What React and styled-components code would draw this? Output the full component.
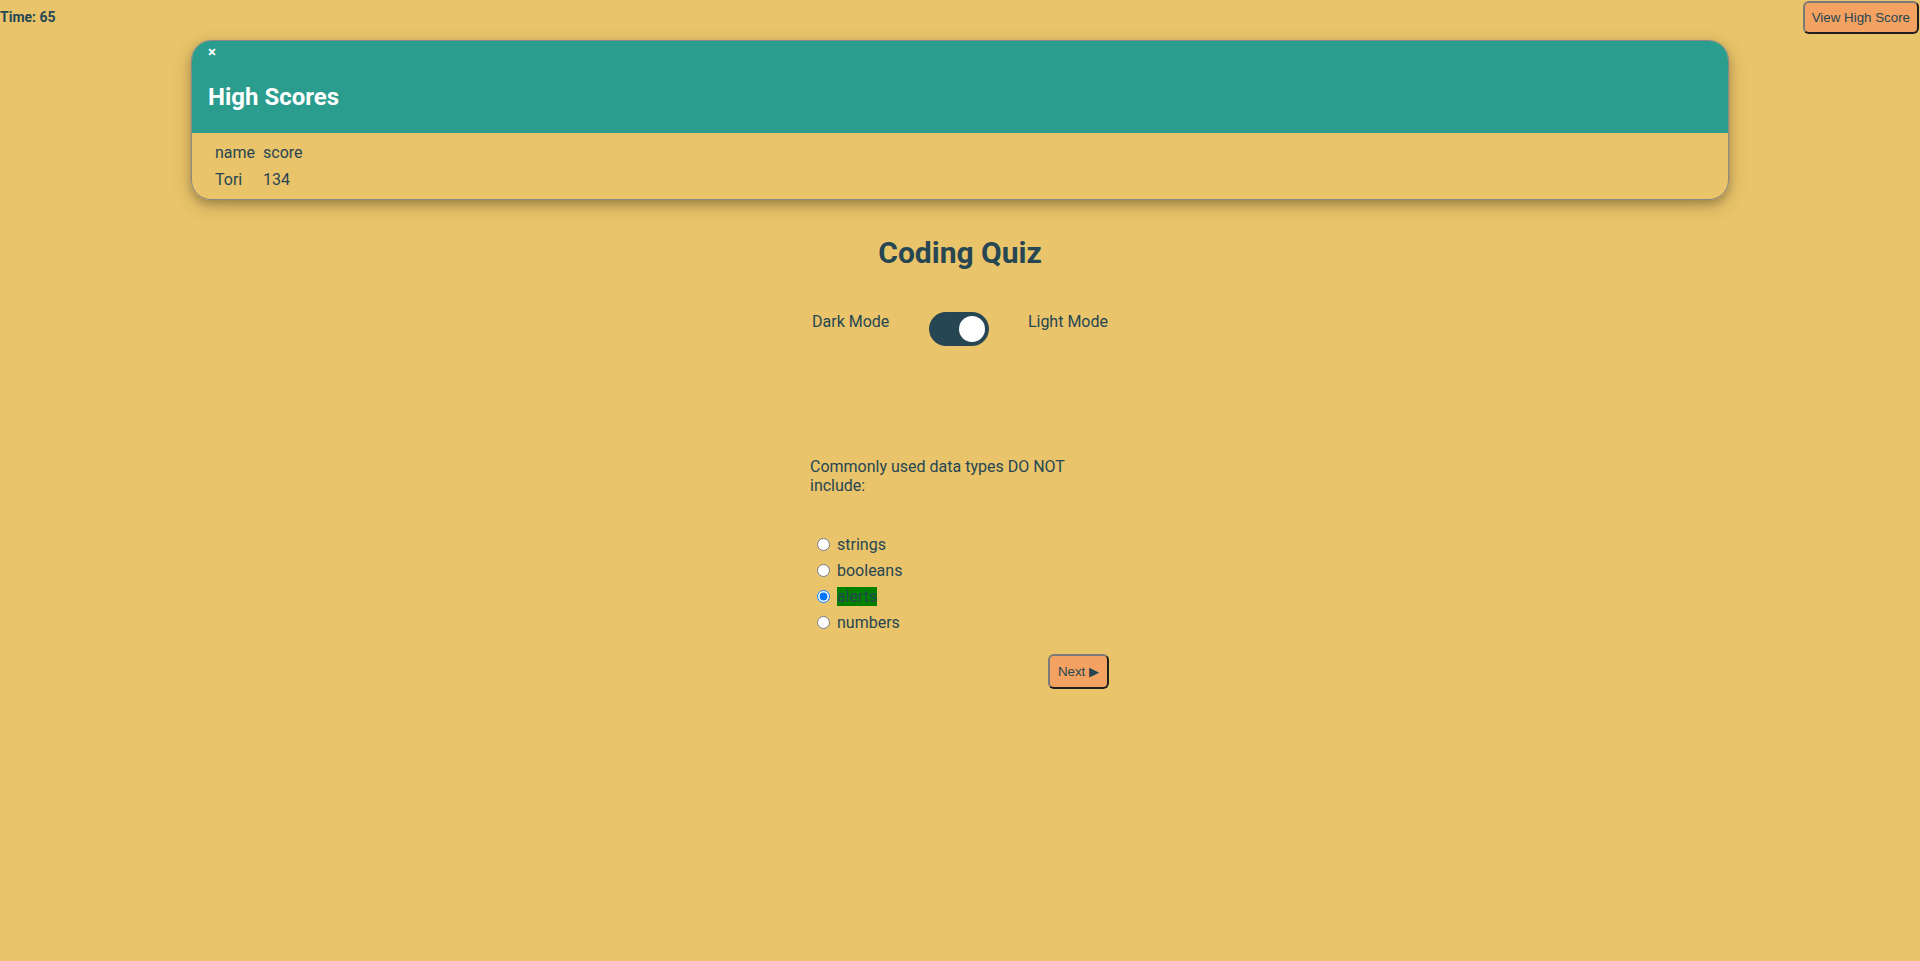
import React, { useState } from "react";
import styled, { createGlobalStyle } from "styled-components";

const GlobalStyle = createGlobalStyle`
  html, body {
    margin: 0;
    padding: 0;
    background: #E9C46A;
    color: #264653;
    font-family: Roboto, "Noto Sans", Arial, sans-serif;
  }
  body { min-height: 961px; }
`;

const TopBar = styled.header`
  display: flex;
  justify-content: space-between;
  align-items: flex-start;
  height: 35px;
`;

const Timer = styled.div`
  font-size: 14px;
  font-weight: 700;
  line-height: 16px;
  padding-top: 9px;
`;

const Button = styled.button`
  font-family: "Liberation Sans", Arial, sans-serif;
  font-size: 13.33px;
  line-height: 15px;
  color: #264653;
  background: #F4A261;
  border: 2px solid;
  border-color: #7a7a7a #1f1f1f #1f1f1f #7a7a7a;
  border-radius: 6px;
  padding: ${(p) => p.$pad || "7px 7px"};
  margin: ${(p) => p.$margin || "0"};
  cursor: pointer;
`;

const Modal = styled.section`
  width: 80%;
  margin: 5px auto 0;
  border: 1px solid #888;
  border-radius: 20px;
  overflow: hidden;
  box-shadow: 0 4px 8px 0 rgba(0, 0, 0, 0.2), 0 6px 20px 0 rgba(0, 0, 0, 0.19);
`;

const ModalHeader = styled.div`
  background: #2A9D8F;
  color: #fff;
  padding: 0 16px;
`;

const Close = styled.span`
  display: block;
  font-size: 15px;
  font-weight: 700;
  line-height: 16px;
  padding-top: 3px;
  cursor: pointer;
`;

const ModalTitle = styled.h2`
  margin: 23px 0 0;
  padding-bottom: 22px;
  font-size: 24px;
  font-weight: 700;
  line-height: normal;
`;

const ModalBody = styled.div`
  padding: 10px 23px 10px;
`;

const ScoreTable = styled.div`
  display: grid;
  grid-template-columns: auto auto;
  justify-content: start;
  column-gap: 8px;
  row-gap: 8px;
  font-size: 16px;
  line-height: normal;
`;

const Main = styled.main`
  width: 300px;
  margin: 0 auto;
`;

const Title = styled.h1`
  margin: 35px 0 0;
  font-size: 30px;
  font-weight: 700;
  line-height: normal;
  text-align: center;
`;

const ModeRow = styled.div`
  display: flex;
  justify-content: space-between;
  align-items: flex-start;
  padding: 0 2px;
  margin-top: 42px;
  font-size: 16px;
`;

const Switch = styled.label`
  position: relative;
  display: block;
  width: 60px;
  height: 34px;
  border-radius: 34px;
  background: #264653;
  cursor: pointer;
`;

const Knob = styled.span`
  position: absolute;
  top: 4px;
  left: 4px;
  width: 26px;
  height: 26px;
  border-radius: 50%;
  background: #fff;
  transform: translateX(${(p) => (p.$on ? "26px" : "0")});
  transition: transform 0.3s;
`;

const HiddenInput = styled.input`
  opacity: 0;
  width: 0;
  height: 0;
  position: absolute;
`;

const Question = styled.p`
  margin: 111px 0 0;
  font-size: 16px;
  line-height: normal;
`;

const Options = styled.div`
  margin-top: 36px;
`;

const OptionRow = styled.label`
  display: flex;
  align-items: center;
  height: 26px;
  font-size: 16px;
`;

const Radio = styled.input`
  width: 13px;
  height: 13px;
  margin: 0 7px 0 7px;
`;

const OptionText = styled.span`
  background: ${(p) => (p.$selected ? "#008000" : "transparent")};
  line-height: normal;
`;

const Actions = styled.div`
  display: flex;
  justify-content: flex-end;
  margin-top: 19px;
`;

const answers = ["strings", "booleans", "alerts", "numbers"];

export default function App() {
  const [light, setLight] = useState(true);
  const [choice, setChoice] = useState("alerts");

  return (
    <>
      <GlobalStyle />
      <TopBar>
        <Timer>Time: 65</Timer>
        <Button $margin="1px 1px 0 0">View High Score</Button>
      </TopBar>

      <Modal>
        <ModalHeader>
          <Close>×</Close>
          <ModalTitle>High Scores</ModalTitle>
        </ModalHeader>
        <ModalBody>
          <ScoreTable>
            <span>name</span>
            <span>score</span>
            <span>Tori</span>
            <span>134</span>
          </ScoreTable>
        </ModalBody>
      </Modal>

      <Main>
        <Title>Coding Quiz</Title>
        <ModeRow>
          <span>Dark Mode</span>
          <Switch>
            <HiddenInput
              type="checkbox"
              checked={light}
              onChange={() => setLight(!light)}
            />
            <Knob $on={light} />
          </Switch>
          <span>Light Mode</span>
        </ModeRow>

        <Question>Commonly used data types DO NOT include:</Question>

        <Options>
          {answers.map((a) => (
            <OptionRow key={a}>
              <Radio
                type="radio"
                name="answer"
                value={a}
                checked={choice === a}
                onChange={() => setChoice(a)}
              />
              <OptionText $selected={choice === a}>{a}</OptionText>
            </OptionRow>
          ))}
        </Options>

        <Actions>
          <Button $pad="8px 8px" $margin="0 1px 0 0">Next ▶</Button>
        </Actions>
      </Main>
    </>
  );
}
